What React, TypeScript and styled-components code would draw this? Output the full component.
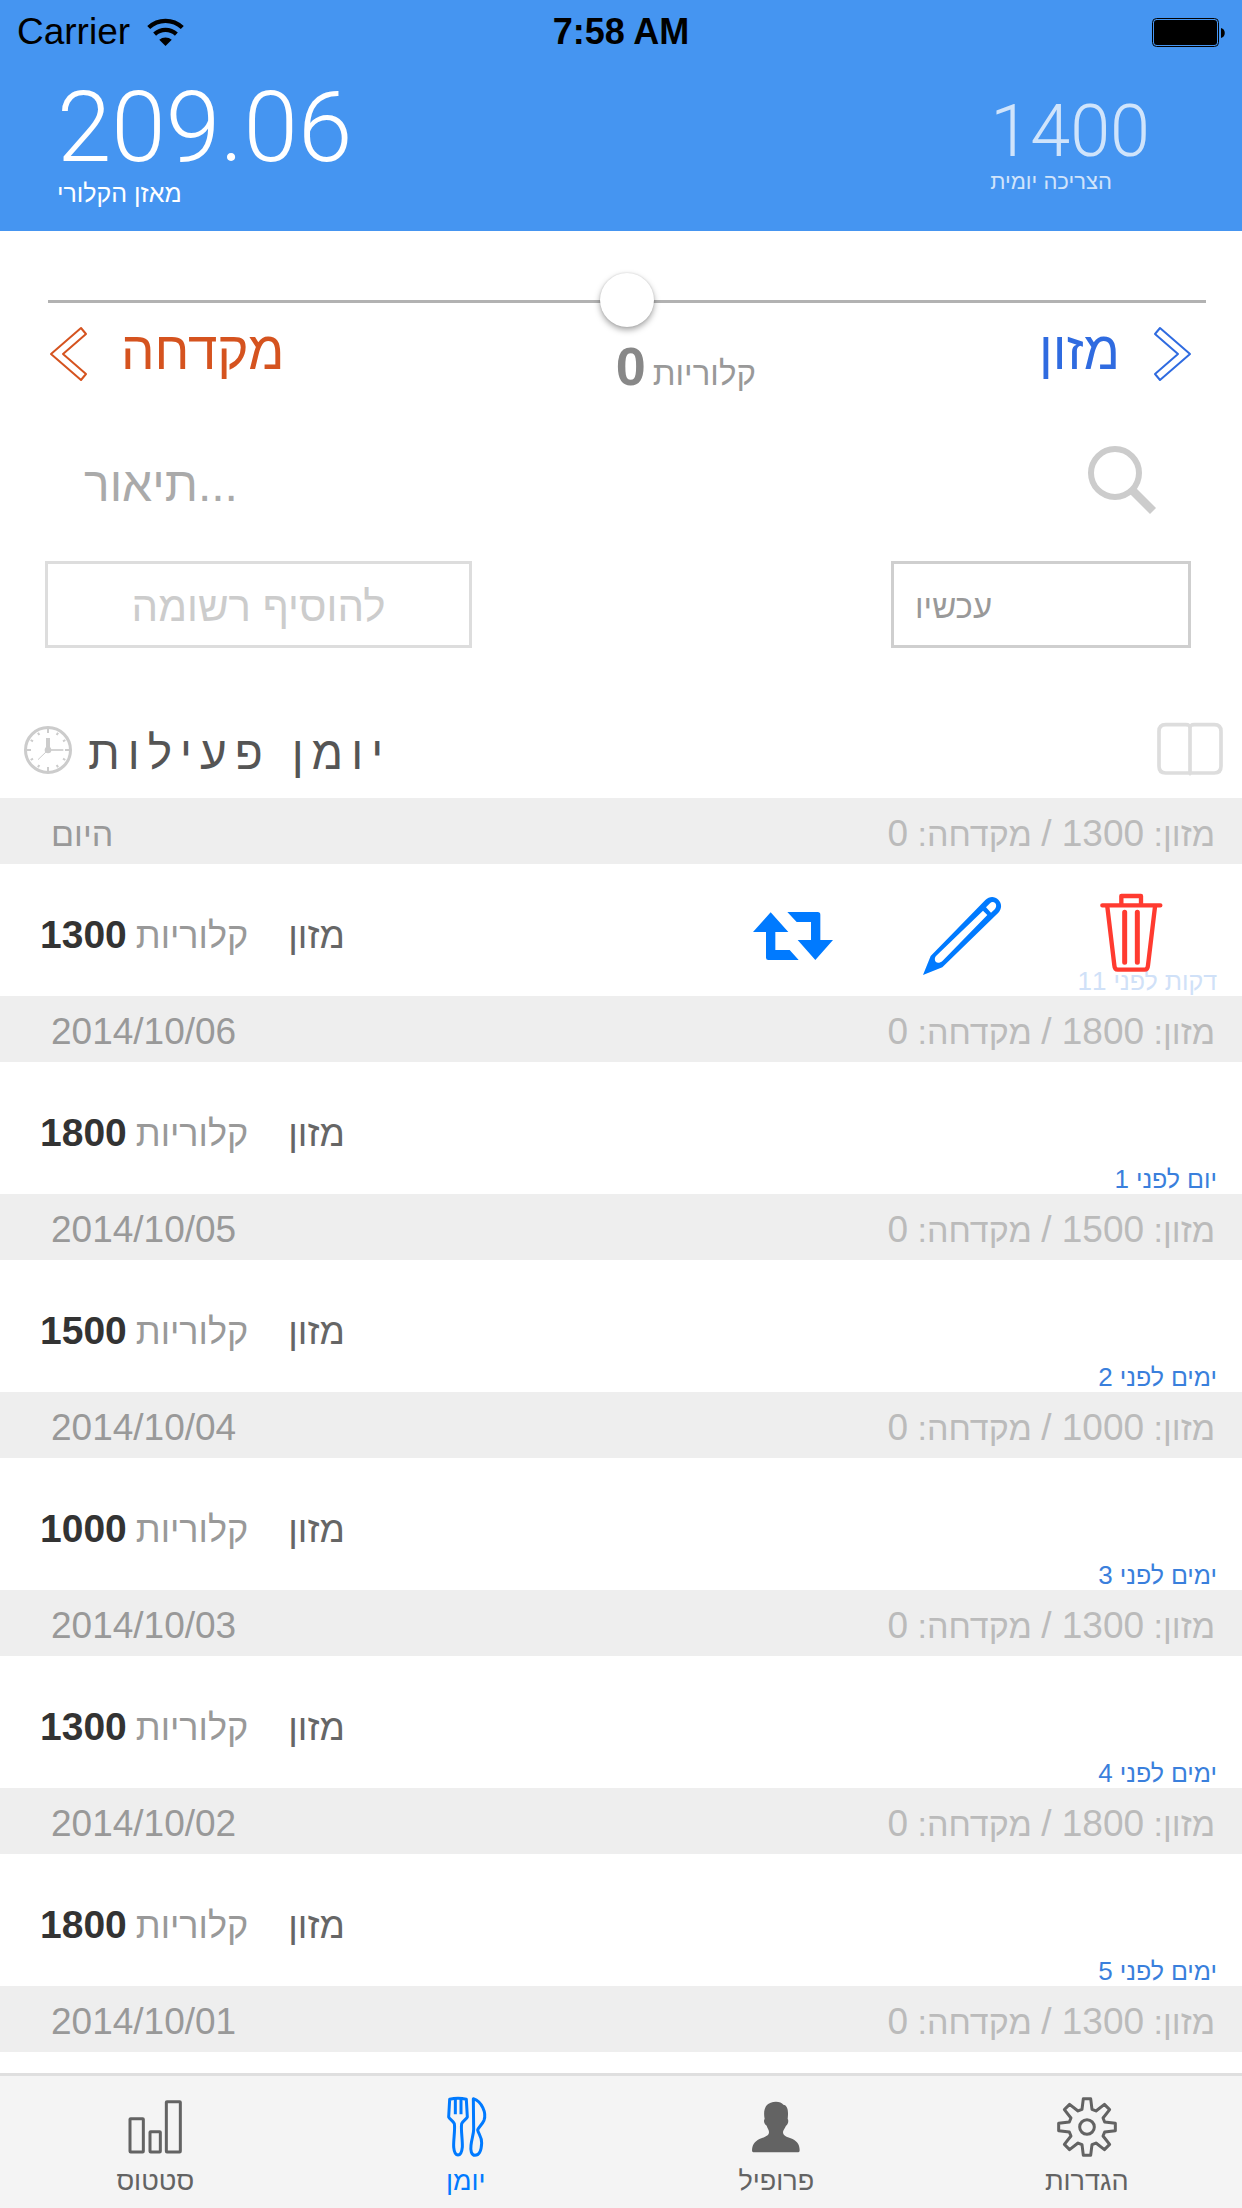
import React, { useState } from 'react';
import styled, { createGlobalStyle } from 'styled-components';

const sans = '"Liberation Sans", Arial, sans-serif';
const thin = 'Roboto, "Liberation Sans", sans-serif';

const GlobalStyle = createGlobalStyle`
  * { box-sizing: border-box; }
  body { margin: 0; background: #fff; }
  button, input { font: inherit; color: inherit; margin: 0; }
  button { padding: 0; border: 0; background: none; cursor: pointer; }
  svg { display: block; flex: none; overflow: visible; }
`;

const Screen = styled.div`
  display: flex;
  flex-direction: column;
  height: 100vh;
  background: #fff;
  font-family: ${sans};
`;

/* ---------- header ---------- */

const Header = styled.header`
  flex: none;
  height: 231px;
  background: #4595f1;
  color: #fff;
`;

const StatusBar = styled.div`
  display: grid;
  grid-template-columns: 1fr auto 1fr;
  align-items: center;
  height: 60px;
  padding: 0 17px;
  color: #000;
  font-size: 36px;
  line-height: 64px;
`;

const Carrier = styled.span`
  display: flex;
  align-items: center;
  gap: 17px;
  font-size: 37px;
`;

const Clock = styled.span`
  font-weight: 700;
`;

const BatterySlot = styled.span`
  display: flex;
  justify-content: flex-end;
`;

const Summary = styled.div`
  display: flex;
  justify-content: space-between;
  padding: 19px 92px 0 57px;
`;

const Stat = styled.div<{ $minor?: boolean }>`
  display: flex;
  flex-direction: column;
  align-items: flex-start;
  padding-top: ${(p) => (p.$minor ? 17 : 0)}px;
  opacity: ${(p) => (p.$minor ? 0.75 : 1)};
`;

const StatValue = styled.span<{ $minor?: boolean }>`
  font-family: ${thin};
  font-weight: 300;
  font-size: ${(p) => (p.$minor ? 72 : 98)}px;
  line-height: 1;
`;

const StatLabel = styled.span<{ $minor?: boolean }>`
  font-size: ${(p) => (p.$minor ? 22 : 25)}px;
  line-height: ${(p) => (p.$minor ? 28 : 32)}px;
`;

/* ---------- entry form ---------- */

const Form = styled.form`
  flex: none;
  margin: 0;
`;

const SliderRow = styled.div`
  padding: 45px 36px 0 48px;
`;

const Slider = styled.input`
  display: block;
  width: 100%;
  height: 51px;
  appearance: none;
  background: none;

  &::-webkit-slider-runnable-track {
    height: 3px;
    background: #b2b2b2;
  }

  &::-webkit-slider-thumb {
    appearance: none;
    width: 54px;
    height: 54px;
    margin-top: -27px;
    border-radius: 50%;
    background: #fff;
    box-shadow: 0 3px 6px rgba(0, 0, 0, 0.35), 0 0 2px rgba(0, 0, 0, 0.15);
  }
`;

const KindRow = styled.div`
  display: grid;
  grid-template-columns: 13fr auto 10fr;
  align-items: start;
  height: 119px;
  padding: 0 51px 0 50px;
`;

const KindButton = styled.button<{ $color: string; $end?: boolean }>`
  display: flex;
  align-items: flex-start;
  gap: 34px;
  height: 54px;
  justify-self: ${(p) => (p.$end ? 'end' : 'start')};
  color: ${(p) => p.$color};
  font-size: 53px;
  line-height: 48px;
`;

const Counter = styled.output`
  display: flex;
  align-items: baseline;
  gap: 7px;
  color: #999;
  font-size: 33px;
  line-height: 78px;
`;

const CounterValue = styled.b`
  color: #888;
  font-size: 54px;
`;

const DescriptionRow = styled.div`
  display: flex;
  align-items: center;
  justify-content: space-between;
  height: 68px;
  padding: 0 86px 0 84px;
`;

const DescriptionInput = styled.input`
  flex: 1;
  min-width: 0;
  height: 68px;
  padding: 9px 0 0;
  border: 0;
  outline: 0;
  background: none;
  font-size: 48px;

  &::placeholder { color: #aaa; opacity: 1; }
`;

const SubmitRow = styled.div`
  display: flex;
  justify-content: space-between;
  padding: 47px 51px 0 45px;
`;

const AddButton = styled.button`
  width: 427px;
  height: 87px;
  padding-top: 5px;
  border: 3px solid #ddd;
  color: #ccc;
  font-size: 42px;
`;

const WhenInput = styled.input`
  width: 300px;
  height: 87px;
  padding: 5px 21px 0;
  border: 3px solid #cfcfcf;
  background: none;
  color: #999;
  font-size: 33px;
`;

/* ---------- journal ---------- */

const JournalHead = styled.div`
  display: flex;
  flex: none;
  align-items: center;
  gap: 16px;
  height: 150px;
  padding: 54px 19px 0 24px;
`;

const JournalTitle = styled.h1`
  flex: 1;
  margin: 0;
  padding-top: 5px;
  color: #555;
  font-size: 46px;
  font-weight: 400;
  line-height: 60px;
  letter-spacing: 8px;
`;

const Journal = styled.main`
  flex: 1;
  min-height: 0;
  overflow: hidden;
`;

const DayBar = styled.h2`
  display: flex;
  align-items: baseline;
  justify-content: space-between;
  height: 66px;
  margin: 0;
  padding: 5px 27px 0 51px;
  background: #eee;
  color: #999;
  font-size: 34px;
  font-weight: 400;
  line-height: 62px;
`;

const Totals = styled.span`
  color: #bbb;
`;

const Digits = styled.span`
  font-size: 37px;
`;

const Entry = styled.article`
  display: grid;
  grid-template-columns: auto auto 1fr;
  grid-template-rows: 132px;
  column-gap: 40px;
  align-items: baseline;
  padding: 0 25px 0 40px;
  font-size: 36px;
  line-height: 142px;
`;

const Amount = styled.span`
  display: flex;
  align-items: baseline;
  gap: 9px;
  color: #999;
`;

const AmountValue = styled.b`
  color: #333;
  font-size: 39px;
`;

const Kind = styled.span`
  color: #666;
  font-size: 37px;
`;

const Ago = styled.time<{ $faded?: boolean }>`
  grid-area: 1 / 3;
  align-self: end;
  justify-self: end;
  color: ${(p) => (p.$faded ? '#d0e1f8' : '#3a7fdc')};
  font-size: 25px;
  line-height: 30px;
`;

const AgoCount = styled.span`
  font-size: 26px;
`;

const Actions = styled.div`
  display: flex;
  grid-area: 1 / 3;
  align-self: center;
  justify-self: end;
  gap: 89px;
  padding: 8px 46px 0 0;
`;

const ActionButton = styled.button<{ $danger?: boolean }>`
  color: ${(p) => (p.$danger ? '#ff3b30' : '#007aff')};
`;

/* ---------- tabs ---------- */

const TabBar = styled.nav`
  display: grid;
  flex: none;
  grid-template-columns: repeat(4, 1fr);
  height: 135px;
  border-top: 3px solid #dfdfdf;
  background: #f4f4f4;
`;

const Tab = styled.a<{ $active?: boolean }>`
  display: flex;
  flex-direction: column;
  align-items: center;
  padding-top: 21px;
  color: ${(p) => (p.$active ? '#007aff' : '#636363')};
  font-size: 27px;
  line-height: 48px;
  text-decoration: none;
`;

/* ---------- icons ---------- */

const WifiIcon = () => (
  <svg width="37" height="27" viewBox="0 0 112 82" fill="none" stroke="#000" strokeWidth="13">
    <path d="M5 26A74 74 0 0 1 107 26M23 46A49 49 0 0 1 89 46" />
    <path d="M56 82 37 63A29 29 0 0 1 75 63Z" fill="#000" stroke="none" />
  </svg>
);

const BatteryIcon = () => (
  <svg width="73" height="29" viewBox="0 0 73 29">
    <rect x="0.5" y="0.5" width="66" height="28" rx="4" fill="none" stroke="#000" />
    <rect x="2" y="2" width="63" height="25" rx="3" />
    <path d="M69 10C74 11 74 19 69 20Z" />
  </svg>
);

const ChevronIcon = ({ left }: { left?: boolean }) => (
  <svg width="37" height="54" viewBox="0 0 37 54" fill="none" stroke="currentColor" strokeWidth="2" strokeLinejoin="round">
    <path d={left ? 'M31 1 1 27 31 53 36 47 13 27 36 7Z' : 'M6 1 36 27 6 53 1 47 24 27 1 7Z'} />
  </svg>
);

const SearchIcon = () => (
  <svg width="68" height="68" viewBox="0 0 68 68" fill="none" stroke="#ccc">
    <circle cx="27" cy="27" r="24" strokeWidth="6" />
    <path d="M44 44 65 65" strokeWidth="8.5" />
  </svg>
);

const ClockIcon = () => (
  <svg width="48" height="48" viewBox="-72 -72 144 144" fill="none" stroke="#ccc">
    <circle r="67.5" strokeWidth="9" />
    {Array.from({ length: 12 }, (_, i) => (
      <path key={i} d={i % 3 ? 'M0-52V-60' : 'M0-51V-64'} strokeWidth="6" transform={`rotate(${i * 30})`} />
    ))}
    <path d="M0 0V-36" strokeWidth="12" />
    <path d="M0 0H46" strokeWidth="5" />
    <path d="M0 0-30 29" strokeWidth="3" />
    <circle r="10" fill="#ccc" stroke="none" />
  </svg>
);

const BookIcon = () => (
  <svg width="66" height="54" viewBox="0 3 198 162" fill="none" stroke="#ddd" strokeWidth="11">
    <path d="M99 20C99 10 95 8 86 8H26Q6 8 6 28V133Q6 153 26 153H99H172Q192 153 192 133V28Q192 8 172 8H112C103 8 99 10 99 20V156" />
    <path d="M94 156H104L99 162Z" fill="#ddd" stroke="none" />
  </svg>
);

const RepeatIcon = () => (
  <svg width="80" height="84" viewBox="0 0 240 252" fill="currentColor">
    <path d="M53 61 106 120H67V174H110L137 204H46Q39 204 39 197V120H0Z" />
    <path d="M103 60H194Q202 60 202 68V144H240L187 204 134 144H174V90H131Z" />
  </svg>
);

const PencilIcon = () => (
  <svg width="80" height="84" viewBox="0 0 240 252" fill="currentColor" fillRule="evenodd">
    <path d="M3 249 26 192 190 24C202 12 218 12 229 23 240 34 240 50 229 62L61 226ZM42 192 183 56 196 69 62 206C54 213 46 214 41 209 37 204 38 197 42 192ZM192 46 204 34C209 29 215 29 220 34 224 39 223 46 219 51L207 62Z" />
  </svg>
);

const TrashIcon = () => (
  <svg width="80" height="84" viewBox="0 0 240 252" fill="none" stroke="currentColor" strokeWidth="13" strokeLinecap="round" strokeLinejoin="round">
    <path d="M34 40H208M91 36V12H150V36" />
    <path d="M49 44 70 220Q71 233 80 233H161Q170 233 171 220L192 44" />
    <path d="M101 61V211M139 61V211" strokeWidth="15" />
  </svg>
);

const BarsIcon = () => (
  <svg width="60" height="60" viewBox="0 0 180 180" fill="none" stroke="currentColor" strokeWidth="9" strokeLinejoin="round">
    <rect x="15" y="65" width="40" height="100" rx="2" />
    <rect x="75" y="104" width="31" height="61" rx="2" />
    <rect x="124" y="14" width="42" height="151" rx="2" />
  </svg>
);

const CutleryIcon = () => (
  <svg width="60" height="60" viewBox="0 0 180 180" fill="none" stroke="currentColor" strokeWidth="9" strokeLinejoin="round">
    <path d="M41 7Q66 1 91 7L94 60C92 66 82 70 77 80 74 96 80 130 79 150 76 182 56 182 53 150 52 130 58 96 55 80 50 70 40 66 38 60Z" />
    <path d="M58 6V52M75 6V52" />
    <path d="M112 5C138 14 152 48 144 70 138 84 126 92 125 99 127 110 138 120 137 138 136 164 128 175 117 175 106 175 103 160 105 145 107 125 113 112 113 97Z" />
  </svg>
);

const PersonIcon = () => (
  <svg width="60" height="60" viewBox="0 0 180 180" fill="currentColor">
    <path d="M56 66C50 36 60 14 90 14 100 14 108 17 112 23 125 25 128 40 125 66 129 70 126 83 120 86 117 94 111 99 111 105 111 114 117 118 134 124 150 130 161 140 161 160Q161 166 157 166H22Q18 166 18 160C19 140 30 130 46 124 62 118 69 114 69 105 69 98 64 93 62 86 54 82 52 70 56 66Z" />
  </svg>
);

const gearPoints = Array.from({ length: 8 }, (_, i) => {
  const a = (i * Math.PI) / 4;
  return [[-15, -53], [-11, -85], [11, -85], [15, -53]]
    .map(([x, y]) => `${(x * Math.cos(a) - y * Math.sin(a)).toFixed(1)},${(x * Math.sin(a) + y * Math.cos(a)).toFixed(1)}`)
    .join(' ');
}).join(' ');

const GearIcon = () => (
  <svg width="60" height="60" viewBox="-90 -90 180 180" fill="none" stroke="currentColor" strokeWidth="9" strokeLinejoin="round">
    <polygon points={gearPoints} />
    <circle r="22" />
  </svg>
);

/* ---------- data ---------- */

interface Day {
  date: string;
  food: number;
  ago?: [string, number];
  open?: boolean;
}

const days: Day[] = [
  { date: 'היום', food: 1300, ago: ['דקות לפני', 11], open: true },
  { date: '2014/10/06', food: 1800, ago: ['יום לפני', 1] },
  { date: '2014/10/05', food: 1500, ago: ['ימים לפני', 2] },
  { date: '2014/10/04', food: 1000, ago: ['ימים לפני', 3] },
  { date: '2014/10/03', food: 1300, ago: ['ימים לפני', 4] },
  { date: '2014/10/02', food: 1800, ago: ['ימים לפני', 5] },
  { date: '2014/10/01', food: 1300 },
];

const tabs = [
  { label: 'סטטוס', Icon: BarsIcon },
  { label: 'יומן', Icon: CutleryIcon, active: true },
  { label: 'פרופיל', Icon: PersonIcon },
  { label: 'הגדרות', Icon: GearIcon },
];

export default function App() {
  const [amount, setAmount] = useState(0);

  return (
    <>
      <GlobalStyle />
      <Screen>
        <Header>
          <StatusBar>
            <Carrier>Carrier <WifiIcon /></Carrier>
            <Clock>7:58 AM</Clock>
            <BatterySlot><BatteryIcon /></BatterySlot>
          </StatusBar>
          <Summary>
            <Stat>
              <StatValue>209.06</StatValue>
              <StatLabel>מאזן הקלורי</StatLabel>
            </Stat>
            <Stat $minor>
              <StatValue $minor>1400</StatValue>
              <StatLabel $minor>הצריכה יומית</StatLabel>
            </Stat>
          </Summary>
        </Header>

        <Form onSubmit={(e) => e.preventDefault()}>
          <SliderRow>
            <Slider
              type="range"
              min={-1000}
              max={1000}
              value={amount}
              aria-label="קלוריות"
              onChange={(e) => setAmount(Number(e.target.value))}
            />
          </SliderRow>
          <KindRow>
            <KindButton type="button" $color="#d5531f"><ChevronIcon left />מקדחה</KindButton>
            <Counter>
              <CounterValue>{Math.abs(amount)}</CounterValue>
              <span>קלוריות</span>
            </Counter>
            <KindButton type="button" $color="#2f6be0" $end>מזון<ChevronIcon /></KindButton>
          </KindRow>
          <DescriptionRow>
            <DescriptionInput type="text" placeholder="תיאור..." aria-label="תיאור" />
            <button type="button" aria-label="חיפוש"><SearchIcon /></button>
          </DescriptionRow>
          <SubmitRow>
            <AddButton type="submit">להוסיף רשומה</AddButton>
            <WhenInput type="text" defaultValue="עכשיו" aria-label="זמן" />
          </SubmitRow>
        </Form>

        <JournalHead>
          <ClockIcon />
          <JournalTitle>יומן פעילות</JournalTitle>
          <button type="button" aria-label="יומן"><BookIcon /></button>
        </JournalHead>

        <Journal>
          {days.map((day) => (
            <section key={day.date}>
              <DayBar>
                {/^\d/.test(day.date) ? <Digits>{day.date}</Digits> : <span>{day.date}</span>}
                <Totals dir="rtl">
                  מזון: <Digits>{day.food} /</Digits> מקדחה: <Digits>0</Digits>
                </Totals>
              </DayBar>
              {day.ago && (
                <Entry>
                  <Amount>
                    <AmountValue>{day.food}</AmountValue>
                    <span>קלוריות</span>
                  </Amount>
                  <Kind>מזון</Kind>
                  <Ago dir="rtl" $faded={day.open}>
                    {day.ago[0]} <AgoCount>{day.ago[1]}</AgoCount>
                  </Ago>
                  {day.open && (
                    <Actions>
                      <ActionButton type="button" aria-label="חזרה"><RepeatIcon /></ActionButton>
                      <ActionButton type="button" aria-label="עריכה"><PencilIcon /></ActionButton>
                      <ActionButton type="button" aria-label="מחיקה" $danger><TrashIcon /></ActionButton>
                    </Actions>
                  )}
                </Entry>
              )}
            </section>
          ))}
        </Journal>

        <TabBar>
          {tabs.map(({ label, Icon, active }) => (
            <Tab key={label} href="#" $active={active}><Icon />{label}</Tab>
          ))}
        </TabBar>
      </Screen>
    </>
  );
}
